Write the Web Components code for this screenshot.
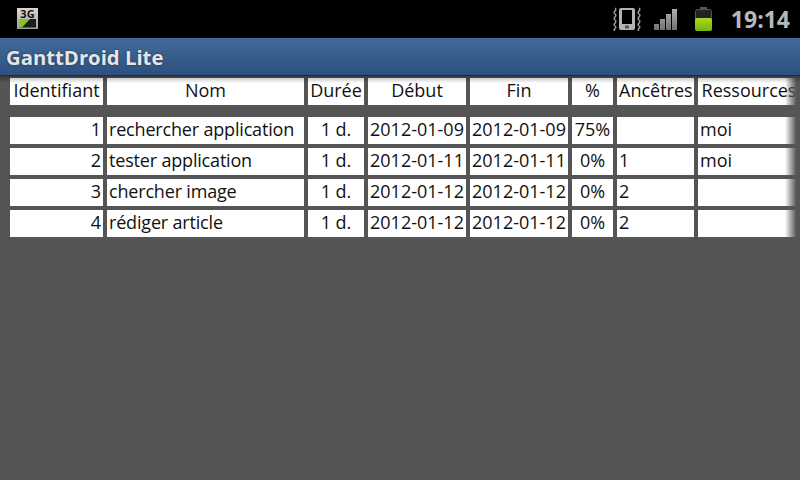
<!DOCTYPE html>
<html lang="fr">
<head>
<meta charset="utf-8">
<title>GanttDroid Lite</title>
<style>
    html, body {
        margin: 0;
        width: 800px;
        height: 480px;
        overflow: hidden;
        background: #555555;
    }
    body {
        display: flex;
        flex-direction: column;
        font-family: "Open Sans", "Noto Sans", sans-serif;
    }
</style>
</head>
<body>
<status-bar></status-bar>
<title-bar>GanttDroid Lite</title-bar>
<task-table></task-table>

<script>
class StatusBar extends HTMLElement {
    constructor() {
        super();
        this.attachShadow({ mode: 'open' });
        this.shadowRoot.innerHTML = `
            <style>
                :host {
                    display: flex;
                    align-items: center;
                    height: 38px;
                    flex: none;
                    padding: 0 10px 0 17px;
                    background: #000;
                }
                #right {
                    margin-left: auto;
                    display: flex;
                    align-items: center;
                }
                #time {
                    font: bold 23px "Open Sans", sans-serif;
                    color: #b8b8b8;
                    margin-left: 17px;
                    line-height: 38px;
                }
                svg { display: block; }
                #net { align-self: flex-start; margin-top: 3px; }
            </style>
            <svg id="net" width="21" height="26" viewBox="0 -5 21 26">
                <defs>
                    <linearGradient id="g3" x1="0" y1="0" x2="0" y2="1">
                        <stop offset="0" stop-color="#d8d8d8"/>
                        <stop offset="1" stop-color="#a0a0a0"/>
                    </linearGradient>
                </defs>
                <rect x="0" y="0" width="21" height="21" fill="url(#g3)"/>
                <text x="10.5" y="10" text-anchor="middle" font-family="Open Sans" font-weight="700" font-size="11" fill="#111">3G</text>
                <rect x="2" y="11" width="17" height="8.5" fill="#1c1c1c"/>
                <polygon points="2,19.5 2,11 13,11 5,19.5" fill="#86c41e"/>
            </svg>
            <div id="right">
                <svg width="30" height="24" viewBox="0 0 30 24" fill="none">
                    <path d="M3 1 C6 3 0 5 3 7 C6 9 0 11 3 13 C6 15 0 17 3 19 C6 21 0 22 3 24" stroke="#a0a0a0" stroke-width="1.4"/>
                    <path d="M27 1 C30 3 24 5 27 7 C30 9 24 11 27 13 C30 15 24 17 27 19 C30 21 24 22 27 24" stroke="#a0a0a0" stroke-width="1.4"/>
                    <rect x="7" y="1" width="16" height="22" rx="2" fill="#b4b4b4"/>
                    <rect x="10" y="3" width="10" height="14" fill="#000"/>
                    <rect x="13" y="18.5" width="4" height="3" fill="#555"/>
                </svg>
                <svg style="margin-left:12px" width="24" height="22" viewBox="0 0 24 22">
                    <defs>
                        <linearGradient id="gs" x1="0" y1="0" x2="0" y2="22" gradientUnits="userSpaceOnUse">
                            <stop offset="0" stop-color="#b4b4b4"/>
                            <stop offset="1" stop-color="#707070"/>
                        </linearGradient>
                    </defs>
                    <rect x="0" y="16" width="5" height="6" fill="url(#gs)"/>
                    <rect x="6" y="11" width="5" height="11" fill="url(#gs)"/>
                    <rect x="12" y="6" width="5" height="16" fill="url(#gs)"/>
                    <rect x="18" y="1" width="5" height="21" fill="url(#gs)"/>
                </svg>
                <svg style="margin-left:16px" width="20" height="24" viewBox="0 0 20 24">
                    <defs>
                        <linearGradient id="gb" x1="0" y1="0" x2="0" y2="1">
                            <stop offset="0" stop-color="#a8dc1c"/>
                            <stop offset="1" stop-color="#78b412"/>
                        </linearGradient>
                    </defs>
                    <rect x="6" y="0" width="7" height="3" fill="#555"/>
                    <rect x="1.5" y="2.5" width="16" height="21" rx="2" fill="#222" stroke="#555"/>
                    <rect x="1" y="11" width="17" height="13" rx="2" fill="url(#gb)"/>
                </svg>
                <div id="time">19:14</div>
            </div>
        `;
    }
}

class TitleBar extends HTMLElement {
    constructor() {
        super();
        this.attachShadow({ mode: 'open' });
        this.shadowRoot.innerHTML = `
            <style>
                :host {
                    display: flex;
                    align-items: center;
                    height: 38px;
                    flex: none;
                    padding-left: 6px;
                    box-sizing: border-box;
                    background: linear-gradient(#426b98, #2d5080);
                    border-bottom: 1px solid #1c2c40;
                    color: #e6e6e6;
                    font: bold 20.3px "Open Sans", sans-serif;
                    text-shadow: 0 0 2px rgba(0,0,0,0.5);
                }
            </style>
            <slot></slot>
        `;
    }
}

class TableCell extends HTMLElement {
    constructor() {
        super();
        this.attachShadow({ mode: 'open' });
        this.shadowRoot.innerHTML = `
            <style>
                :host {
                    display: block;
                    background: #fff;
                    color: #111;
                    font: 18px/24px "Open Sans", sans-serif;
                    height: 27px;
                    padding: 0 2px;
                    white-space: nowrap;
                    overflow: hidden;
                }
                :host([align="center"]) { text-align: center; }
                :host([align="right"]) { text-align: right; }
                :host([tight]) { letter-spacing: -0.18px; }
            </style>
            <slot></slot>
        `;
    }
}

const COLUMNS = ['Identifiant', 'Nom', 'Durée', 'Début', 'Fin', '%', 'Ancêtres', 'Ressources'];
const ALIGN = ['right', 'left', 'center', 'center', 'center', 'center', 'left', 'left'];
const TASKS = [
    ['1', 'rechercher application', '1 d.', '2012-01-09', '2012-01-09', '75%', '', 'moi'],
    ['2', 'tester application', '1 d.', '2012-01-11', '2012-01-11', '0%', '1', 'moi'],
    ['3', 'chercher image', '1 d.', '2012-01-12', '2012-01-12', '0%', '2', ''],
    ['4', 'rédiger article', '1 d.', '2012-01-12', '2012-01-12', '0%', '2', '']
];

class TaskTable extends HTMLElement {
    constructor() {
        super();
        this.attachShadow({ mode: 'open' });
        const head = COLUMNS.map(c => `<table-cell align="center">${c}</table-cell>`).join('');
        const rows = TASKS.map(t =>
            t.map((v, i) => `<table-cell align="${ALIGN[i]}" ${i === 1 ? 'tight' : ''}>${v}</table-cell>`).join('')
        ).join('');
        this.shadowRoot.innerHTML = `
            <style>
                :host {
                    display: block;
                    position: relative;
                    padding: 2px 0 0 10px;
                    flex: none;
                }
                #grid {
                    display: grid;
                    grid-template-columns: 93px 197px 56px 98px 98px 41px 77px 102px;
                    column-gap: 4px;
                    row-gap: 4px;
                }
                #spacer { grid-column: 1 / -1; height: 4px; }
                /* scroll fade on the right edge, shadow under the title */
                #fade {
                    position: absolute;
                    top: 0;
                    right: 0;
                    width: 15px;
                    height: 100%;
                    background: linear-gradient(to right, rgba(85,85,85,0), #555 75%);
                }
                #shade {
                    position: absolute;
                    top: 0;
                    left: 0;
                    right: 0;
                    height: 7px;
                    background: linear-gradient(rgba(0,0,0,0.3), rgba(0,0,0,0));
                }
            </style>
            <div id="grid">
                ${head}
                <div id="spacer"></div>
                ${rows}
            </div>
            <div id="fade"></div>
            <div id="shade"></div>
        `;
    }
}

customElements.define('status-bar', StatusBar);
customElements.define('title-bar', TitleBar);
customElements.define('table-cell', TableCell);
customElements.define('task-table', TaskTable);
</script>
</body>
</html>
